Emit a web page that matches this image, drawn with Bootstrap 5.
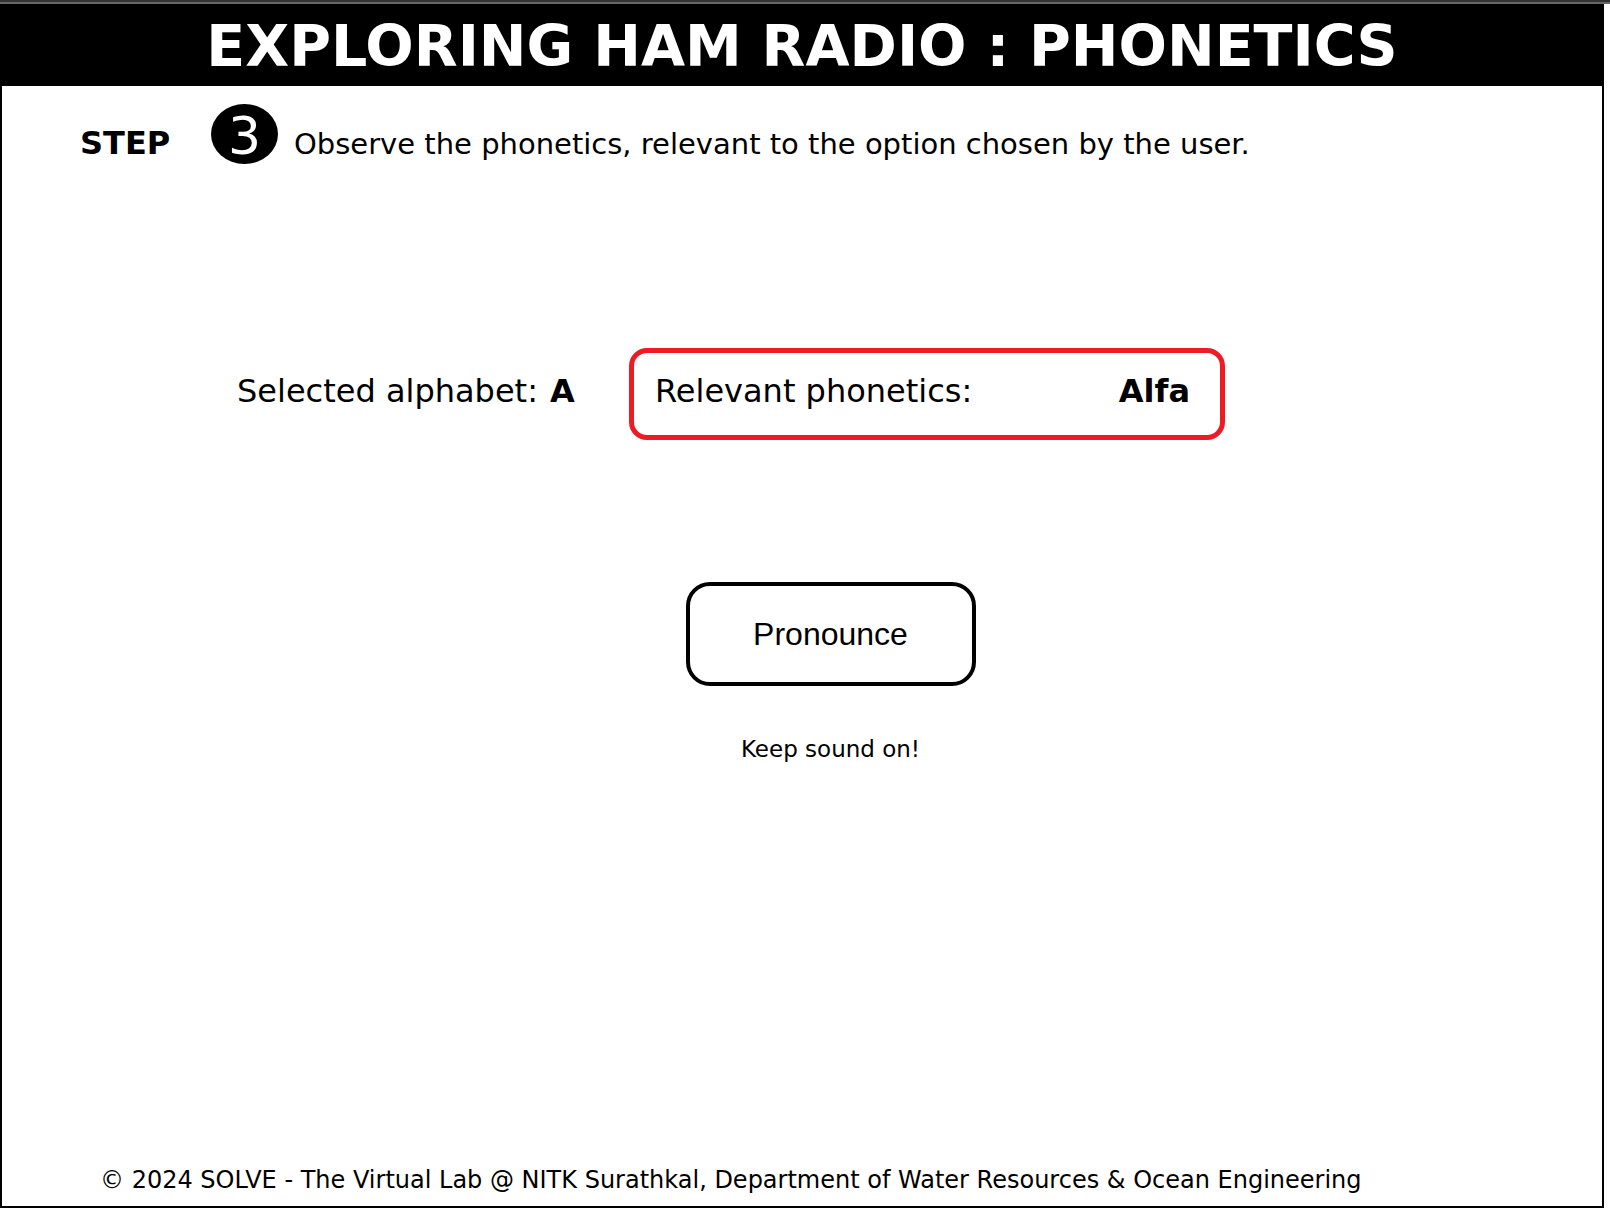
<!DOCTYPE html>
<html lang="en">
<head>
<meta charset="utf-8">
<meta name="viewport" content="width=device-width, initial-scale=1">
<title>Exploring Ham Radio : Phonetics</title>
<link href="https://cdn.jsdelivr.net/npm/bootstrap@5.3.0/dist/css/bootstrap.min.css" rel="stylesheet">
<style>
  body { font-family: Verdana, "DejaVu Sans", sans-serif; color: #000; background: #fff; }
  .top-strip { height: 4px; background: #333; border-bottom: 2px solid #666; }
  .lab-frame { border: 2px solid #000; margin: 0 6px 8px 0; }
  .lab-title { font-size: 57px; line-height: 80px; }
  .step-row { padding: 18px 24px 0 78px; }
  .step-label { width: 131px; font-size: 32px; line-height: 40px; }
  .step-number { width: 67px; height: 60px; border-radius: 50%; margin-right: 16px; font-size: 52px; line-height: 64px; }
  .step-text { font-size: 29px; line-height: 40px; }
  .result-row { margin-top: 184px; padding-left: 235px; font-size: 32px; line-height: 40px; }
  .picked { width: 392px; padding-top: 23px; }
  .picked b { margin-left: 2px; }
  .phonetic-box { width: 596px; padding: 18px 30px 24px 21px; border: 5px solid #ed1c24; border-radius: 18px; }
  .sound-area { margin-top: 142px; padding-left: 57px; }
  .btn-pronounce { width: 290px; height: 104px; border: 4px solid #000; border-radius: 24px; background: #fff; color: #000; font: 32px/40px Arial, "Liberation Sans", sans-serif; }
  .sound-note { margin-top: 45px; font-size: 23px; line-height: 36px; }
  .lab-footer { padding: 0 24px 8px 98px; font-size: 24px; line-height: 36px; }
</style>
<script src="https://cdn.jsdelivr.net/npm/bootstrap@5.3.0/dist/js/bootstrap.bundle.min.js"></script>
</head>
<body class="d-flex flex-column min-vh-100">
  <div class="top-strip"></div>
  <div class="lab-frame d-flex flex-column flex-grow-1">
    <header class="bg-black text-white text-center">
      <h1 class="lab-title fw-bold mb-0">EXPLORING HAM RADIO : PHONETICS</h1>
    </header>
    <main class="flex-grow-1">
      <div class="step-row d-flex align-items-baseline">
        <span class="step-label fw-bold flex-shrink-0">STEP</span>
        <span class="step-number bg-black text-white text-center flex-shrink-0">3</span>
        <span class="step-text">Observe the phonetics, relevant to the option chosen by the user.</span>
      </div>
      <div class="result-row d-flex">
        <div class="picked">Selected alphabet: <b>A</b></div>
        <div class="phonetic-box d-flex justify-content-between">
          <span>Relevant phonetics:</span>
          <b>Alfa</b>
        </div>
      </div>
      <div class="sound-area d-flex flex-column align-items-center">
        <button type="button" class="btn btn-pronounce">Pronounce</button>
        <p class="sound-note mb-0">Keep sound on!</p>
      </div>
    </main>
    <footer class="lab-footer">© 2024 SOLVE - The Virtual Lab @ NITK Surathkal, Department of Water Resources &amp; Ocean Engineering</footer>
  </div>
</body>
</html>
